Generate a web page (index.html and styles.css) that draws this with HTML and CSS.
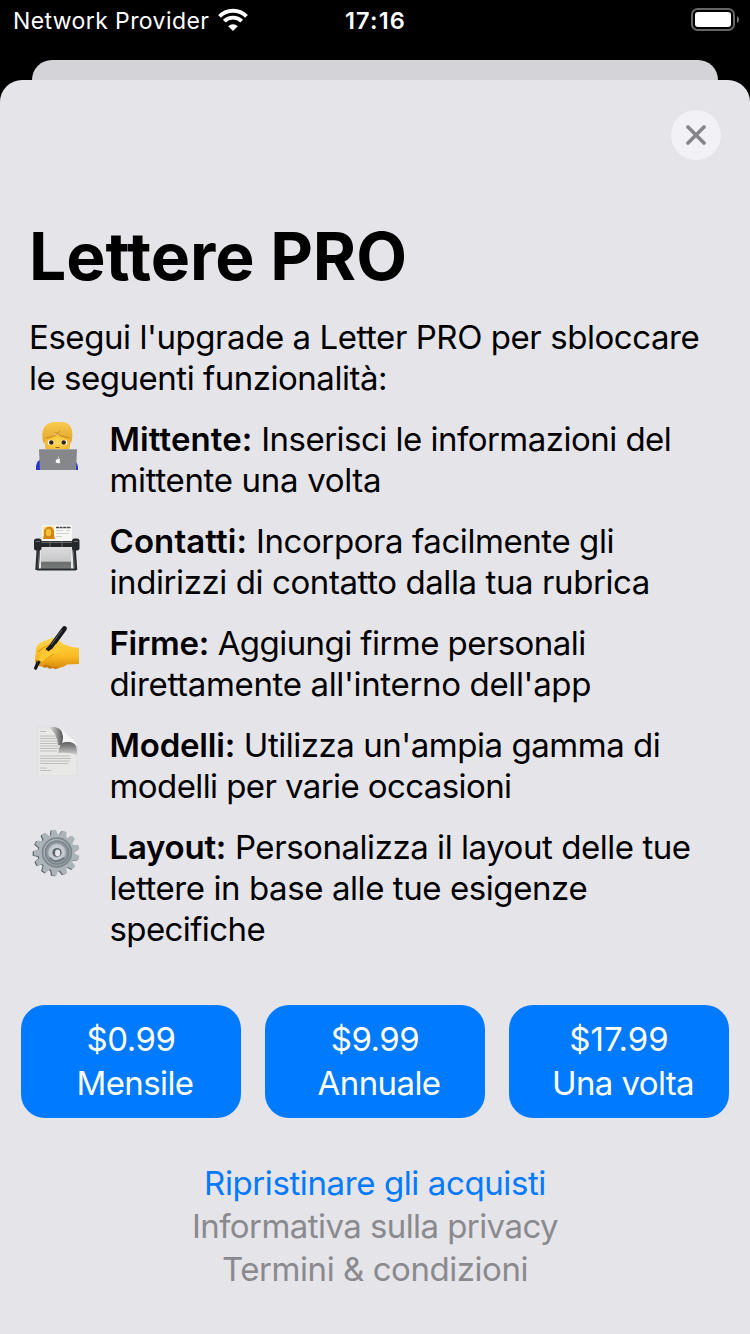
FILE: index.html
```html
<!DOCTYPE html>
<html lang="it">
<head>
<meta charset="utf-8">
<title>Lettere PRO</title>
<link rel="stylesheet" href="styles.css">
</head>
<body>
<header class="status">
  <div class="carrier"><span>Network Provider</span>
    <svg width="30" height="24" viewBox="0 0 30 24" fill="none" stroke="#fff" stroke-width="3.9">
      <path d="M1.5 8.3a19.3 19.3 0 0 1 27 0"/><path d="M6.3 13.2a12.4 12.4 0 0 1 17.4 0"/>
      <path d="M10.2 18.2a7 7 0 0 1 9.6 0L15 23z" fill="#fff" stroke="none"/>
    </svg>
  </div>
  <div class="clock">17:16</div>
  <svg class="battery" width="48" height="24" viewBox="0 0 48 24">
    <rect x="1" y="1" width="42" height="21" rx="5.5" fill="none" stroke="#666" stroke-width="2"/>
    <rect x="4" y="4" width="36" height="15" rx="3" fill="#fff"/>
    <path d="M46 8q2 1 2 3.500t-2 3.500z" fill="#777"/>
  </svg>
</header>
<div class="back-sheet"></div>
<main class="sheet">
  <button class="close" aria-label="Chiudi">
    <svg width="20" height="20" viewBox="0 0 20 20" stroke="#85858a" stroke-width="3.6" stroke-linecap="round"><path d="M2 2l16 16M18 2L2 18"/></svg>
  </button>
  <h1>Lettere PRO</h1>
  <p class="intro"><span class="l1">Esegui l'upgrade a Letter PRO per sbloccare</span><br><span class="l2">le seguenti funzionalità:</span></p>
  <ul class="features">
    <li>
      <svg class="icon" viewBox="0 0 50 50">
        <defs>
          <radialGradient id="face" cx=".5" cy=".4" r=".65"><stop offset="0" stop-color="#ffdc55"/><stop offset="1" stop-color="#efaa20"/></radialGradient>
          <linearGradient id="hair" x2="0" y2="1"><stop offset="0" stop-color="#f9cb4f"/><stop offset="1" stop-color="#dfa02a"/></linearGradient>
        </defs>
        <path d="M5 50v-4q1-6 6-7h29q6 1 7 8v3z" fill="#2937cf"/>
        <path d="M14 15h25v11q-1 8-12.500 8T14 26z" fill="url(#face)"/>
        <path d="M13 24C9 12 12 2 25 2h5c12 0 13 11 10 22l-2-6q-8-1-13-5-4 5-10 5z" fill="url(#hair)"/>
        <path d="M15 18q8 0 14-7M24 12q5 5 14 6" fill="none" stroke="#c48516" stroke-width="1"/>
        <ellipse cx="20" cy="22.500" rx="3.200" ry="2.700" fill="#fff"/><ellipse cx="33" cy="22.500" rx="3.200" ry="2.700" fill="#fff"/>
        <circle cx="20.300" cy="22.500" r="2.300" fill="#3a2110"/><circle cx="32.700" cy="22.500" r="2.300" fill="#3a2110"/>
        <path d="M24.500 27.500h4" stroke="#9a6210" fill="none" stroke-width="1"/>
        <path d="M9 29h36q1 0 1 1l-1 20H9L8 30q0-1 1-1z" fill="#85878a"/>
        <path d="M8.500 29.500h37" stroke="#aaa" stroke-width=".8"/>
        <path d="M26.600 39.200c1.700-.8 2.600-.1 2.600.3-1 .7-.8 2 .2 2.400-.6 1.500-1.500 1.700-2.600 1.200-2.200.8-3.300-4-.2-3.900zM26.800 38.500q0-1.500 1.200-1.900.2 1.500-1.200 1.900" fill="#fff"/>
      </svg>
      <p><b class="b3">Mittente:</b><span class="l3"> Inserisci le informazioni del</span><br><span class="l4">mittente una volta</span></p>
    </li>
    <li>
      <svg class="icon" viewBox="0 0 50 50">
        <defs><linearGradient id="tray" x2="0" y2="1"><stop offset="0" stop-color="#dedee1"/><stop offset=".65" stop-color="#c9c9cc"/><stop offset=".72" stop-color="#6b6f6d"/><stop offset="1" stop-color="#777b79"/></linearGradient></defs>
        <path d="M10 24h30v23H10z" fill="url(#tray)"/>
        <path d="M11 3h30v16H11z" fill="#f7f7f5"/>
        <path d="M12 4.500h11v12.500H12z" fill="#ffe08a"/>
        <path d="M12 17l1-4v-5l3-3 4-.500 3 4v5l1 3.500z" fill="#d2860f"/><ellipse cx="17.500" cy="10.500" rx="2.800" ry="3.700" fill="#f7bd3d"/>
        <path d="M25 5.500h15" stroke="#444" stroke-width="1.300" stroke-dasharray="3 .6"/>
        <path d="M25 8.500h7m3 0h4M25 11.500h13M25 14.500h6" stroke="#c7c7c7" stroke-width=".8"/>
        <path d="M7.500 25L6 48M43 25l1.500 23" stroke="#292d2e" stroke-width="3.500"/>
        <path d="M8.500 25L7 47M42 25l1.500 22" stroke="#788080" stroke-width=".7"/>
        <path d="M6 47.500h39" stroke="#292d2e" stroke-width="2"/>
        <path d="M6 19h39v6H6z" fill="#25282a"/>
        <path d="M7 20.300h36" stroke="#747878" stroke-width="1"/>
        <rect x="3" y="16.500" width="7.500" height="12" rx="2.500" fill="#25282a"/><rect x="41" y="16.500" width="7.500" height="12" rx="2.500" fill="#25282a"/>
        <path d="M4.500 19.500h4.500M42.500 19.500H47M19 19v6M31 19v6" stroke="#666b6b"/>
      </svg>
      <p><b class="b5">Contatti:</b><span class="l5"> Incorpora facilmente gli</span><br><span class="l6">indirizzi di contatto dalla tua rubrica</span></p>
    </li>
    <li>
      <svg class="icon" viewBox="0 0 50 50">
        <defs><linearGradient id="hand" x2="0" y2="1"><stop offset="0" stop-color="#ffd64e"/><stop offset=".6" stop-color="#fbbd25"/><stop offset="1" stop-color="#dc8d0c"/></linearGradient></defs>
        <path d="M11 39q-1 4 2 4.500 2 .5 3-.5 2 3 6 1 2 2 6 0l5-3-4-7z" fill="#c5790a"/>
        <path d="M4 37l1-13q2-5 8-7l8-3q6-1 8 3l3 3q7 3 16 4v16l-12 .5q-5 4-12 3l-9-3-5 2-4-1-2-4z" fill="url(#hand)"/>
        <path d="M7 28l5-4q4-3 8-3M21 40q6 2 13-1M15 39q4 3 8 2" fill="none" stroke="#e39612" stroke-width="1.200"/>
        <path d="M8 36l-2 9-2 1q-1-1-.5-3l2.500-7z" fill="#171719"/>
        <path d="M33.500 4.500L17 27" stroke="#17191c" stroke-width="4.800" stroke-linecap="round"/>
        <path d="M6 37q3-5 8-10l8-6q5-2 7 2 2 4-5 7l-7 4-5 4q-5 3-6-1z" fill="#ffc933"/>
        <path d="M9 39q3 0 6-4l8-5" fill="none" stroke="#de950f"/>
        <path d="M32 6L20 23l-4 3" stroke="#17191c" stroke-width="4" fill="none"/>
        <path d="M31 6L20 21" stroke="#777b84" stroke-width=".8"/>
        <path d="M8.500 37L4 45" stroke="#171719" stroke-width="2.700"/>
      </svg>
      <p><b class="b7">Firme:</b><span class="l7"> Aggiungi firme personali</span><br><span class="l8">direttamente all'interno dell'app</span></p>
    </li>
    <li>
      <svg class="icon" viewBox="0 0 50 50">
        <defs>
          <linearGradient id="curl" x2="0" y2="1"><stop offset="0" stop-color="#606060"/><stop offset=".35" stop-color="#858585"/><stop offset="1" stop-color="#e0e0de"/></linearGradient>
          <linearGradient id="edge"><stop offset=".2" stop-color="#e2e2e0"/><stop offset="1" stop-color="#555"/></linearGradient>
        </defs>
        <path d="M6 1h17q7 1 9 9l2 6 12 4v30H6z" fill="#e8e8e6" stroke="#d7d7d6" stroke-width=".5"/>
        <path d="M15 1h9q7 1 8 9v9h-5q-1-14-12-18z" fill="url(#edge)"/>
        <path d="M30 16h9q7 1 7 9v5q-5-4-19-3z" fill="url(#curl)"/>
        <path d="M25 1q7 1 7 9 0 5-1 7 5-2 9-1 4 1 6 4-1-5-6-8C34 8 32 2 25 1z" fill="#f5f5f5"/>
        <path d="M9 5.500h6M9 10h16M9 12.500h17M9 15h18M9 17.500h17M9 20h19M9 22.500h19M9 25h17M9 30h30M9 32.500h31M9 35h30M9 37.500h28M9 42h7M9 44.500h11" stroke="#b2b2b1" stroke-width=".8"/>
      </svg>
      <p><b class="b9">Modelli:</b><span class="l9"> Utilizza un'ampia gamma di</span><br><span class="l10">modelli per varie occasioni</span></p>
    </li>
    <li>
      <svg class="icon" viewBox="-1 -1 52 52">
        <defs>
          <linearGradient id="steel" x2="1" y2="1"><stop offset="0" stop-color="#bdc4c9"/><stop offset="1" stop-color="#89939a"/></linearGradient>
          <path id="tooth" d="M-4-17L-2.500-23.800h4.500L4-17z"/>
          <g id="gear"><circle r="19"/><use href="#tooth"/><use href="#tooth" transform="rotate(27.700)"/><use href="#tooth" transform="rotate(55.400)"/><use href="#tooth" transform="rotate(83.100)"/><use href="#tooth" transform="rotate(110.800)"/><use href="#tooth" transform="rotate(138.500)"/><use href="#tooth" transform="rotate(166.200)"/><use href="#tooth" transform="rotate(193.800)"/><use href="#tooth" transform="rotate(221.500)"/><use href="#tooth" transform="rotate(249.200)"/><use href="#tooth" transform="rotate(276.900)"/><use href="#tooth" transform="rotate(304.600)"/><use href="#tooth" transform="rotate(332.300)"/></g>
        </defs>
        <use href="#gear" transform="translate(24.500 25.300) rotate(-7)" fill="#59646b"/>
        <use href="#gear" transform="translate(25.700 24.700) rotate(-7)" fill="#acb4b9"/>
        <circle cx="26" cy="24.500" r="15" fill="url(#steel)" stroke="#7d878d" stroke-width="1.800"/>
        <circle cx="26" cy="24.500" r="12" fill="#8e989e" stroke="#788289" stroke-width="1.500"/>
        <circle cx="26" cy="24.500" r="8.800" fill="#c4cacf" stroke="#b2b9bf"/>
        <path d="M18.500 30q6 7 15 0" stroke="#6b757d" fill="none" stroke-width="1.800"/>
        <circle cx="26" cy="24.500" r="4.800" fill="#59646b"/><ellipse cx="26.700" cy="25" rx="2.700" ry="3.600" fill="#e5e5ea"/>
      </svg>
      <p><b class="b11">Layout:</b><span class="l11"> Personalizza il layout delle tue</span><br><span class="l12">lettere in base alle tue esigenze</span><br><span class="l13">specifiche</span></p>
    </li>
  </ul>
  <div class="plans">
    <button><span class="price">$0.99</span><span class="period">Mensile</span></button>
    <button><span class="price">$9.99</span><span class="period">Annuale</span></button>
    <button><span>$17.99</span><span class="period">Una volta</span></button>
  </div>
  <nav class="links"><a class="restore">Ripristinare gli acquisti</a><a class="privacy">Informativa sulla privacy</a><a class="terms">Termini &amp; condizioni</a></nav>
</main>
</body>
</html>
```
FILE: styles.css
```css
* { box-sizing: border-box; margin: 0; padding: 0; }
body { width: 750px; height: 1334px; overflow: hidden; background: #000; color: #000; font: 400 33px/41px Inter, "Liberation Sans", sans-serif; display: flex; flex-direction: column; }
button { border: 0; font: inherit; }
.status { height: 60px; padding: 8px 11px 0 13px; color: #fff; font-size: 23px; line-height: 26px; display: grid; grid-template-columns: 1fr auto 1fr; align-items: start; }
.carrier { display: flex; gap: 9px; white-space: nowrap; letter-spacing: .4px; }
.clock { font-size: 23.5px; font-weight: 600; letter-spacing: 1.2px; margin-right: 1px; }
.battery { justify-self: end; }
.back-sheet { height: 20px; margin: 0 32px; background: #d4d3d8; border-radius: 20px 20px 0 0; }
.sheet { flex: 1; background: #e5e4e9; border-radius: 22px 22px 0 0; padding: 30px 21px 0; display: flex; flex-direction: column; }
.close { align-self: flex-end; width: 50px; height: 50px; margin-right: 8px; border-radius: 50%; background: #f2f1f6; display: grid; place-items: center; }
h1 { margin: 56px 0 0 8px; font-size: 66px; line-height: 80px; font-weight: 700; letter-spacing: -.05px; white-space: nowrap; }
.intro { margin: 21px 0 20px 8px; white-space: nowrap; }
.features { list-style: none; display: flex; flex-direction: column; gap: 20px; padding-left: 10px; white-space: nowrap; }
.features li { display: flex; gap: 28.5px; }
.icon { width: 50px; height: 50px; margin-top: 1px; flex: none; }
b { font-weight: 600; }

.l1 { letter-spacing: -.44px; }
.l2 { letter-spacing: -.48px; }
.b3 { letter-spacing: .1px; }
.l3 { letter-spacing: -.52px; }
.l4 { letter-spacing: -.33px; }
.b5 { letter-spacing: .1px; }
.l5 { letter-spacing: -.42px; }
.l6 { letter-spacing: -.41px; }
.b7 { letter-spacing: -.3px; }
.l7 { letter-spacing: -.56px; }
.l8 { letter-spacing: -.34px; }
.b9 { letter-spacing: -.2px; }
.l9 { letter-spacing: -.46px; }
.l10 { letter-spacing: -.59px; }
.b11 { letter-spacing: -.25px; }
.l11 { letter-spacing: -.45px; }
.l12 { letter-spacing: -.42px; }
.l13 { letter-spacing: -.6px; }

.plans { margin-top: 55px; display: grid; grid-template-columns: repeat(3, 220px); gap: 24px; }
.plans button { height: 113px; border-radius: 24px; background: #007aff; color: #fff; line-height: 44px; display: flex; flex-direction: column; align-items: center; padding-top: 12px; }
.price { letter-spacing: -.5px; }
.period { padding-left: 8px; letter-spacing: -.6px; }
.links { margin-top: 44px; display: flex; flex-direction: column; align-items: center; line-height: 43px; color: #8a8a8e; }
.restore { color: #007aff; letter-spacing: -.4px; }
.privacy { letter-spacing: -.57px; }
.terms { letter-spacing: -.45px; }
```
